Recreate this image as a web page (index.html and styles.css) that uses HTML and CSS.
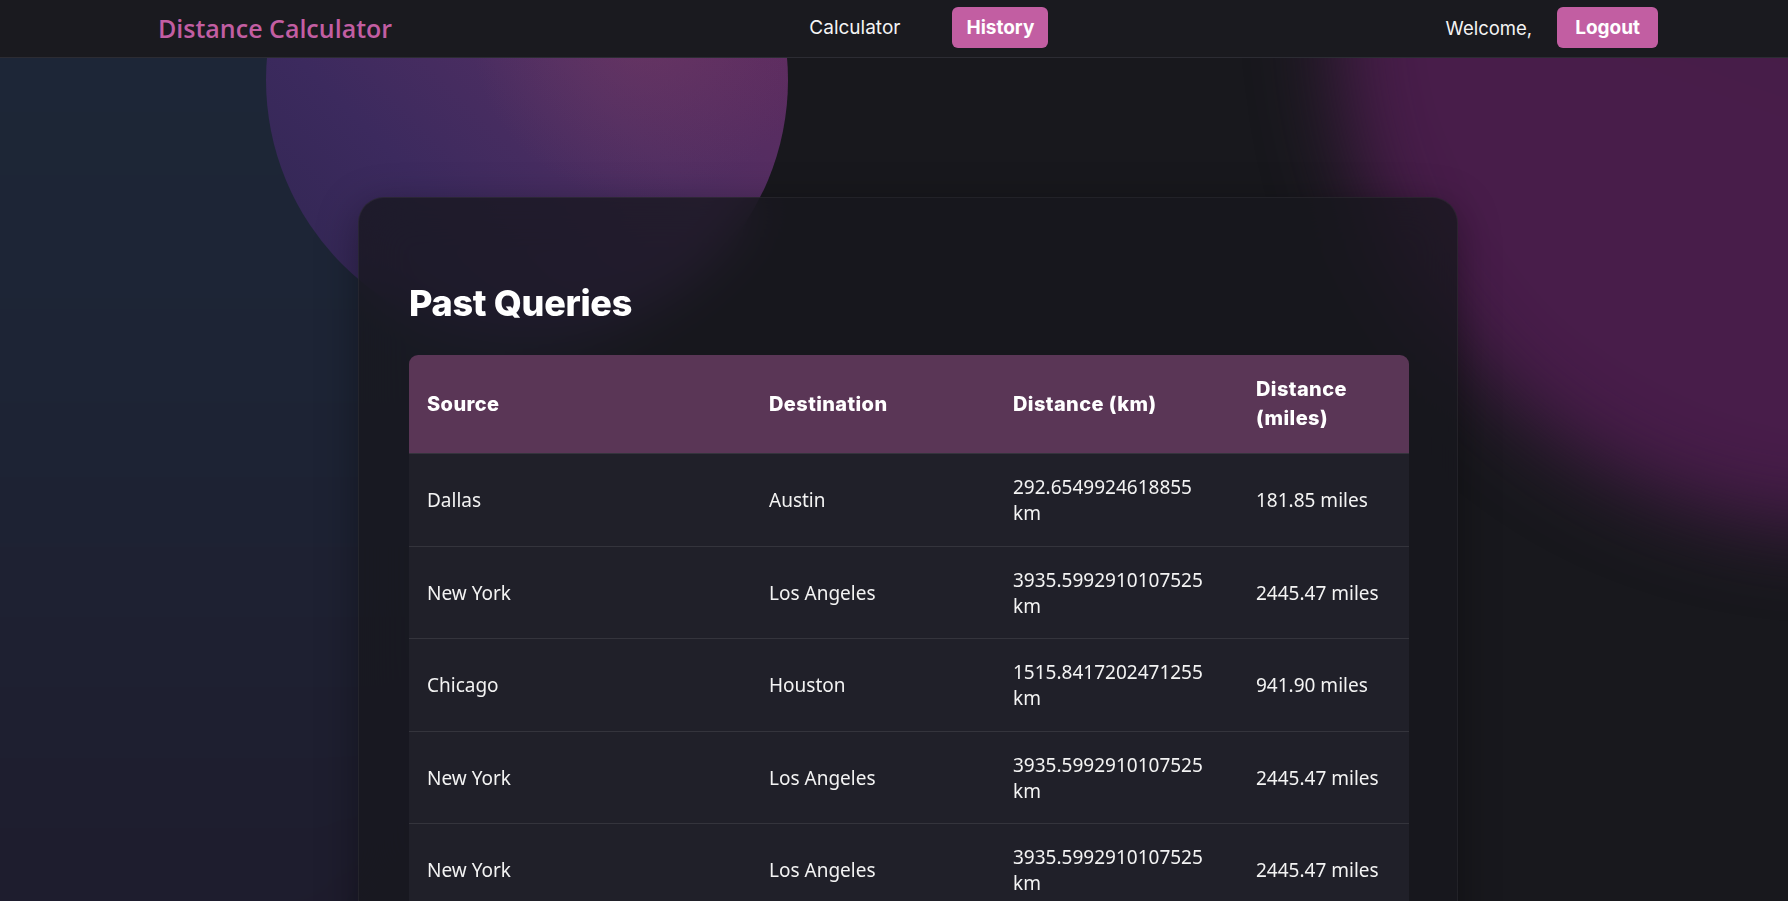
FILE: index.html
```html
<!DOCTYPE html>
<html lang="en">
<head>
<meta charset="utf-8">
<title>Distance Calculator - History</title>
<link rel="stylesheet" href="styles.css">
</head>
<body>
<div class="backdrop" aria-hidden="true">
  <div class="blob blob-left"></div>
  <div class="blob blob-circle"></div>
  <div class="blob blob-right"></div>
</div>

<nav class="navbar">
  <div class="nav-inner">
    <a class="brand" href="#">Distance Calculator</a>
    <div class="nav-links">
      <a class="nav-link" href="#">Calculator</a>
      <a class="nav-link active" href="#">History</a>
    </div>
    <div class="nav-user">
      <span class="welcome">Welcome,</span>
      <button class="btn-logout" type="button">Logout</button>
    </div>
  </div>
</nav>

<main class="main">
  <section class="card">
    <h2 class="title">Past Queries</h2>
    <table class="history-table">
      <colgroup>
        <col class="col-source">
        <col class="col-dest">
        <col class="col-km">
        <col class="col-miles">
      </colgroup>
      <thead>
        <tr>
          <th>Source</th>
          <th>Destination</th>
          <th>Distance (km)</th>
          <th>Distance (miles)</th>
        </tr>
      </thead>
      <tbody>
        <tr><td>Dallas</td><td>Austin</td><td>292.6549924618855 km</td><td>181.85 miles</td></tr>
        <tr><td>New York</td><td>Los Angeles</td><td>3935.5992910107525 km</td><td>2445.47 miles</td></tr>
        <tr><td>Chicago</td><td>Houston</td><td>1515.8417202471255 km</td><td>941.90 miles</td></tr>
        <tr><td>New York</td><td>Los Angeles</td><td>3935.5992910107525 km</td><td>2445.47 miles</td></tr>
        <tr><td>New York</td><td>Los Angeles</td><td>3935.5992910107525 km</td><td>2445.47 miles</td></tr>
        <tr><td>New York</td><td>Los Angeles</td><td>3935.5992910107525 km</td><td>2445.47 miles</td></tr>
      </tbody>
    </table>
  </section>
</main>
</body>
</html>
```

FILE: styles.css
```css
* {
  box-sizing: border-box;
}

html {
  scrollbar-width: none;
}

html::-webkit-scrollbar {
  display: none;
}

body {
  margin: 0;
  min-height: 100vh;
  background: #18181d;
  color: #f2f2f2;
  font-family: "Noto Sans", "Open Sans", sans-serif;
  position: relative;
  overflow-x: hidden;
}

/* ---------- decorative background ---------- */
.backdrop {
  position: absolute;
  inset: 0;
  overflow: hidden;
  z-index: 0;
  pointer-events: none;
}

.blob {
  position: absolute;
}

.blob-left {
  left: -520px;
  top: -200px;
  width: 1100px;
  height: 1400px;
  border-radius: 50%;
  background: linear-gradient(180deg, #1c2838 0%, #1d2435 40%, #1e1c2d 80%, #201b2c 100%);
  filter: blur(60px);
}

.blob-circle {
  left: 266px;
  top: -181px;
  width: 522px;
  height: 522px;
  border-radius: 50%;
  background:
    radial-gradient(circle at 72% 40%, rgba(120, 60, 100, 0.5) 0%, rgba(120, 60, 100, 0) 35%),
    linear-gradient(225deg, #6a2a5e 0%, #4f2e62 45%, #3c2a5e 70%, #2f2650 100%);
}

.blob-right {
  left: 1335px;
  top: -500px;
  width: 1030px;
  height: 1030px;
  border-radius: 50%;
  background: linear-gradient(200deg, #3c1a33 0%, #431c42 35%, #481d4a 60%, #471c49 100%);
  filter: blur(40px);
}

/* ---------- navbar ---------- */
.navbar {
  position: relative;
  z-index: 2;
  background: #1a1a1f;
  border-bottom: 1px solid #2c2c33;
  padding: 7px 0 9px 28px;
}

.nav-inner {
  max-width: 1500px;
  margin: 0 auto;
  display: flex;
  align-items: center;
  justify-content: space-between;
}

.brand {
  font-family: "Open Sans", "Noto Sans", sans-serif;
  font-weight: 600;
  font-size: 25px;
  color: #c25ea2;
  text-decoration: none;
}

.nav-links {
  display: flex;
  align-items: center;
  gap: 52px;
  margin-left: 20px;
}

.nav-link {
  font-family: Inter, "Liberation Sans", sans-serif;
  font-size: 19px;
  color: #f4f4f4;
  text-decoration: none;
  line-height: 25px;
  padding: 8px 0;
}

.nav-link.active {
  background: #c25ea2;
  color: #fff;
  font-weight: 700;
  padding: 8px 14px;
  border-radius: 6px;
}

.nav-user {
  display: flex;
  align-items: center;
  gap: 25px;
}

.welcome {
  font-family: Inter, "Liberation Sans", sans-serif;
  font-size: 18.5px;
  color: #f4f4f4;
}

.btn-logout {
  font-family: Inter, "Liberation Sans", sans-serif;
  font-size: 19px;
  font-weight: 700;
  line-height: 25px;
  color: #fff;
  background: #c25ea2;
  border: none;
  border-radius: 6px;
  padding: 8px 18px;
}

/* ---------- main card ---------- */
.main {
  position: relative;
  z-index: 1;
  padding: 139px 0 60px 28px;
}

.card {
  max-width: 1100px;
  margin: 0 auto;
  padding: 48px 50px 60px;
  background: rgba(23, 23, 29, 0.78);
  backdrop-filter: blur(24px);
  border: 1px solid rgba(255, 255, 255, 0.05);
  border-radius: 26px;
  box-shadow: 0 10px 40px rgba(0, 0, 0, 0.35);
}

.title {
  font-family: Inter, "Liberation Sans", sans-serif;
  font-weight: 800;
  font-size: 36px;
  line-height: 42px;
  color: #fff;
  margin: 36px 0 31px;
  letter-spacing: -0.3px;
}

.history-table {
  width: 100%;
  table-layout: fixed;
  border-collapse: collapse;
  border-radius: 9px;
  overflow: hidden;
}

.col-source { width: 342px; }
.col-dest { width: 244px; }
.col-km { width: 243px; }
.col-miles { width: 171px; }

.history-table thead tr {
  background: #5a3656;
}

.history-table th {
  font-family: Inter, "Liberation Sans", sans-serif;
  font-weight: 800;
  font-size: 20px;
  line-height: 29px;
  letter-spacing: 0.4px;
  text-align: left;
  color: #fff;
  padding: 20px 18px;
  vertical-align: middle;
}

.history-table tbody tr {
  background: #202029;
  border-top: 1px solid #34343c;
}

.history-table td {
  font-size: 19px;
  line-height: 26px;
  color: #f3f3f3;
  padding: 20px 18px 19.5px;
  vertical-align: middle;
}
```
